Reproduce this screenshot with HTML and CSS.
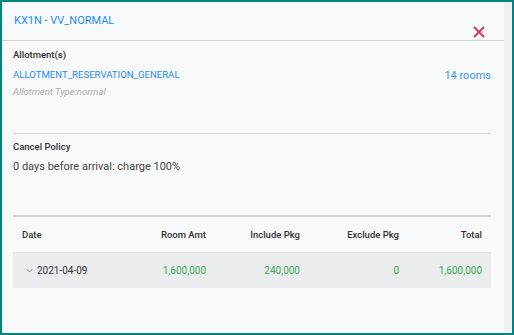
FILE: index.html
```html
<!DOCTYPE html>
<html lang="en">
<head>
  <meta charset="UTF-8">
  <title>Allotment Detail</title>
  <link rel="stylesheet" href="styles.css">
</head>
<body>
<div class="modal">
  <div class="content">
    <div class="header">
      <span class="title">KX1N - VV_NORMAL</span>
      <span class="close">
        <svg width="12" height="12" viewBox="0 0 12 12"><path d="M1 1L11 11M11 1L1 11" stroke="#e0314b" stroke-width="1.8"/></svg>
      </span>
    </div>

    <div class="body">
      <div class="section allot">
        <div class="label">Allotment(s)</div>
        <div class="allot-row">
          <span class="link">ALLOTMENT_RESERVATION_GENERAL</span>
          <span class="link rooms">14 rooms</span>
        </div>
        <div class="type">Allotment Type:normal</div>
      </div>

      <div class="section cancel">
        <div class="label">Cancel Policy</div>
        <div class="policy">0 days before arrival: charge 100%</div>
      </div>

      <div class="table">
        <div class="row head">
          <div class="cell left">Date</div>
          <div class="cell">Room Amt</div>
          <div class="cell">Include Pkg</div>
          <div class="cell">Exclude Pkg</div>
          <div class="cell">Total</div>
        </div>
        <div class="row item">
          <div class="cell left">
            <svg class="chev" width="7" height="5" viewBox="0 0 7 5"><path d="M0.5 1L3.5 4L6.5 1" fill="none" stroke="#888" stroke-width="1"/></svg>2021-04-09
          </div>
          <div class="cell num">1,600,000</div>
          <div class="cell num">240,000</div>
          <div class="cell num">0</div>
          <div class="cell num">1,600,000</div>
        </div>
      </div>
    </div>
  </div>
  <div class="gutter"></div>
</div>
</body>
</html>
```

FILE: styles.css
```css
* {
  margin: 0;
  padding: 0;
  box-sizing: border-box;
}

body, html {
  width: 100%;
  height: 100%;
}

body {
  font-family: Roboto, "Liberation Sans", sans-serif;
  color: #333;
}

.modal {
  height: 335px;
  border: 2px solid #00857f;
  background: #f8f9fa;
  display: flex;
}

.content {
  flex: 1;
}

.gutter {
  width: 8px;
  background: #eef0f2;
}

.header {
  height: 39px;
  border-bottom: 1px solid #cfd0d2;
  display: flex;
  justify-content: space-between;
  padding: 0 19px 0 12px;
}

.title {
  font-size: 11px;
  color: #1f8cf0;
  line-height: 38px;
}

.close {
  padding-top: 21px;
}

.body {
  padding: 0 13px 0 11px;
}

.label {
  font-size: 9.5px;
  font-weight: 500;
  color: #333;
}

.allot {
  padding-top: 8px;
  height: 93px;
  border-bottom: 1px solid #cfd0d2;
}

.allot-row {
  display: flex;
  justify-content: space-between;
  margin-top: 9px;
}

.link {
  font-size: 9.6px;
  color: #1f8cf0;
}

.rooms {
  font-size: 11px;
  color: #3a95f0;
}

.type {
  font-size: 9.5px;
  font-style: italic;
  color: #aaa;
  margin-top: 4px;
}

.cancel {
  padding-top: 7px;
  height: 83px;
  border-bottom: 2px solid #d4d5d7;
}

.policy {
  font-size: 11px;
  color: #444;
  margin-top: 8px;
}

.row {
  display: grid;
  grid-template-columns: 107px 94px 94px 99px 83px;
  align-items: center;
}

.head {
  height: 36px;
  font-size: 9.5px;
  font-weight: 500;
  color: #333;
  border-bottom: 1px solid #e3e4e6;
}

.item {
  height: 35px;
  background: #ebecee;
  font-size: 10px;
}

.cell {
  text-align: right;
  padding-right: 8px;
}

.cell.left {
  text-align: left;
  padding-left: 9px;
  color: #333;
}

.item .cell.left {
  padding-left: 13px;
}

.chev {
  margin-right: 4px;
  vertical-align: 1px;
}

.num {
  color: #3aab55;
}
```
